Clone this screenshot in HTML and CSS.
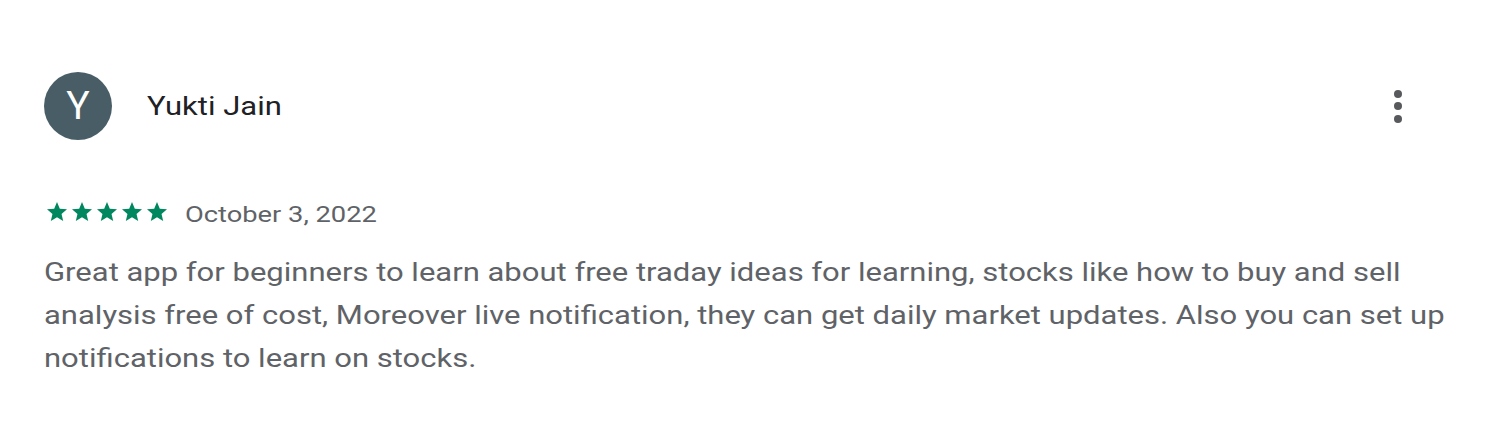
FILE: index.html
```html
<!DOCTYPE html>
<html>
<head>
<meta charset="utf-8">
<link rel="stylesheet" href="styles.css">
</head>
<body>
<div class="review">
  <div class="header">
    <div class="avatar">Y</div>
    <div class="name"><span class="wide">Yukti Jain</span></div>
    <div class="menu" aria-label="More options">
      <span class="dot"></span><span class="dot"></span><span class="dot"></span>
    </div>
  </div>
  <div class="meta">
    <div class="stars">
      <svg viewBox="0 0 24 24" class="star"><path d="M12 17.27L18.18 21l-1.64-7.03L22 9.24l-7.19-.61L12 2 9.19 8.63 2 9.24l5.46 4.73L5.82 21z"/></svg>
      <svg viewBox="0 0 24 24" class="star"><path d="M12 17.27L18.18 21l-1.64-7.03L22 9.24l-7.19-.61L12 2 9.19 8.63 2 9.24l5.46 4.73L5.82 21z"/></svg>
      <svg viewBox="0 0 24 24" class="star"><path d="M12 17.27L18.18 21l-1.64-7.03L22 9.24l-7.19-.61L12 2 9.19 8.63 2 9.24l5.46 4.73L5.82 21z"/></svg>
      <svg viewBox="0 0 24 24" class="star"><path d="M12 17.27L18.18 21l-1.64-7.03L22 9.24l-7.19-.61L12 2 9.19 8.63 2 9.24l5.46 4.73L5.82 21z"/></svg>
      <svg viewBox="0 0 24 24" class="star"><path d="M12 17.27L18.18 21l-1.64-7.03L22 9.24l-7.19-.61L12 2 9.19 8.63 2 9.24l5.46 4.73L5.82 21z"/></svg>
    </div>
    <span class="date wide">October 3, 2022</span>
  </div>
  <p class="text">Great app for beginners to learn about free traday ideas for learning, stocks like how to buy and sell analysis free of cost, Moreover live notification, they can get daily market updates. Also you can set up notifications to learn on stocks.</p>
</div>
</body>
</html>
```

FILE: styles.css
```css
html, body {
  margin: 0;
  padding: 0;
  background: #ffffff;
}
body {
  font-family: Roboto, "Noto Sans", sans-serif;
}
.review {
  padding: 72px 40px 0 44px;
}
.wide {
  display: inline-block;
  transform: scaleX(1.24);
  transform-origin: 0 50%;
}
.header {
  display: flex;
  align-items: center;
  height: 68px;
}
.avatar {
  width: 68px;
  height: 68px;
  border-radius: 50%;
  background: #485d65;
  color: #ffffff;
  display: flex;
  align-items: center;
  justify-content: center;
  font-size: 39px;
  flex: none;
}
.name {
  margin-left: 35px;
  font-size: 25px;
  color: #202124;
  flex: 1;
}
.menu {
  display: flex;
  flex-direction: column;
  align-items: center;
  gap: 4.5px;
  width: 24px;
  margin-right: 35px;
}
.dot {
  width: 8px;
  height: 8px;
  border-radius: 50%;
  background: #58595c;
}
.meta {
  display: flex;
  align-items: center;
  margin-top: 60px;
  height: 24px;
}
.stars {
  display: flex;
  gap: 1px;
  margin-left: 1px;
}
.star {
  width: 24px;
  height: 24px;
  fill: #01875f;
}
.date {
  margin-left: 16px;
  font-size: 22px;
  color: #5f6368;
  position: relative;
  top: 2px;
}
.text {
  margin: 27px 0 0 0;
  width: 1133px;
  font-size: 25px;
  line-height: 43px;
  color: #5f6368;
  transform: scaleX(1.24);
  transform-origin: 0 0;
}
```
